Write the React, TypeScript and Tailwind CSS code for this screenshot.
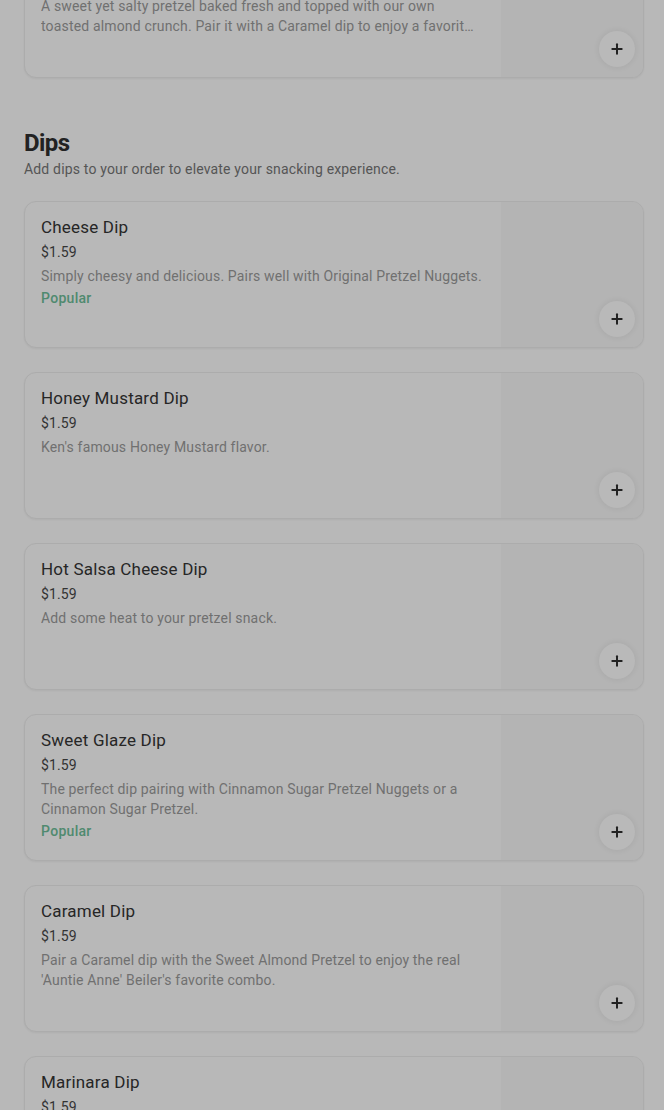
import { Plus } from 'lucide-react';

type Item = {
  name: string;
  price: string;
  description: string;
  popular?: boolean;
};

const dips: Item[] = [
  {
    name: 'Cheese Dip',
    price: '$1.59',
    description: 'Simply cheesy and delicious. Pairs well with Original Pretzel Nuggets.',
    popular: true,
  },
  { name: 'Honey Mustard Dip', price: '$1.59', description: "Ken's famous Honey Mustard flavor." },
  { name: 'Hot Salsa Cheese Dip', price: '$1.59', description: 'Add some heat to your pretzel snack.' },
  {
    name: 'Sweet Glaze Dip',
    price: '$1.59',
    description: 'The perfect dip pairing with Cinnamon Sugar Pretzel Nuggets or a Cinnamon Sugar Pretzel.',
    popular: true,
  },
  {
    name: 'Caramel Dip',
    price: '$1.59',
    description: "Pair a Caramel dip with the Sweet Almond Pretzel to enjoy the real 'Auntie Anne' Beiler's favorite combo.",
  },
  { name: 'Marinara Dip', price: '$1.59', description: 'A classic marinara to pair with any pretzel.' },
];

function ItemCard({ item }: { item: Item }) {
  return (
    <div className="flex h-[147px] w-[620px] overflow-hidden rounded-xl border border-[#acacac] bg-[#b8b8b8] shadow-[0_1px_2px_rgba(0,0,0,0.05)]">
      <div className="flex-1 pl-4 pr-4 pt-[14px]">
        <div className="text-[17px] leading-[22px] font-normal tracking-[0.2px] text-[#262626]">{item.name}</div>
        <div className="mt-1 text-[14px] leading-5 tracking-[0.1px] text-[#333333]">{item.price}</div>
        <p className="mt-1 line-clamp-2 text-[14px] leading-5 tracking-[0.16px] text-[#707070]">{item.description}</p>
        {item.popular && (
          <div className="mt-[2px] text-[14px] leading-5 font-medium tracking-[0.3px] text-[#4f8a6f]">Popular</div>
        )}
      </div>
      <div className="relative w-[142px] shrink-0 bg-[#b4b4b4]">
        <button className="absolute bottom-[10px] right-2 flex h-9 w-9 items-center justify-center rounded-full bg-[#b9b9b9] text-[#222222] shadow-[0_0_6px_rgba(0,0,0,0.08)]">
          <Plus className="h-4 w-4" strokeWidth={3} />
        </button>
      </div>
    </div>
  );
}

export default function App() {
  return (
    <div
      className="min-h-screen overflow-hidden bg-[#b8b8b8] pl-6"
      style={{ fontFamily: 'Roboto, "Liberation Sans", sans-serif' }}
    >
      <div className="-mt-[69px]">
        <ItemCard
          item={{
            name: 'Sweet Almond Pretzel',
            price: '$5.49',
            description:
              'A sweet yet salty pretzel baked fresh and topped with our own toasted almond crunch. Pair it with a Caramel dip to enjoy a favorit Auntie Anne combo.',
          }}
        />
      </div>

      <div className="mt-[49px]">
        <h2 className="text-[24px] leading-8 font-bold tracking-tight text-[#222222]">Dips</h2>
        <p className="text-[14px] leading-5 tracking-[0.17px] text-[#555555]">
          Add dips to your order to elevate your snacking experience.
        </p>
      </div>

      <div className="mt-[22px] flex flex-col gap-6">
        {dips.map((d) => (
          <ItemCard key={d.name} item={d} />
        ))}
      </div>
    </div>
  );
}
